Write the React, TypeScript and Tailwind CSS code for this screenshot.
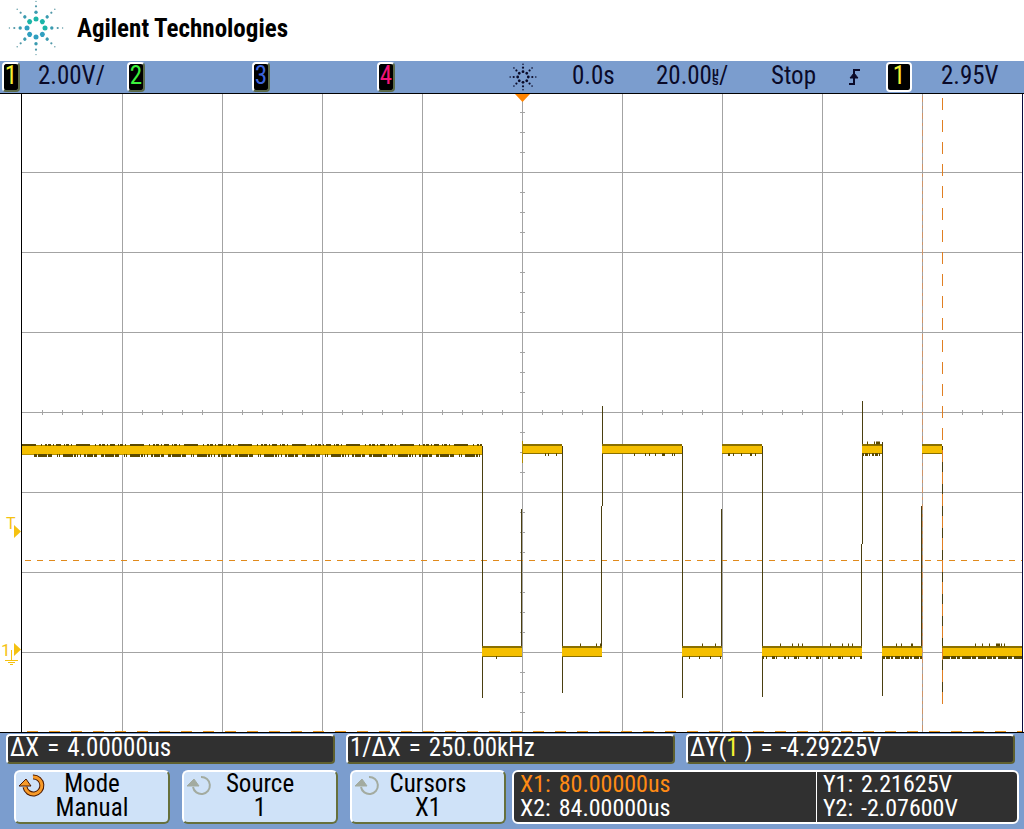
import type { ReactNode } from "react";

const FONT = "font-['Liberation_Sans_Narrow','Roboto_Condensed',Roboto,sans-serif]";

type Level = "high" | "low";

interface Segment {
  from: number;
  to: number;
  level: Level;
  above?: string;
  below?: string;
}

interface Edge {
  x: number;
  top: number;
  bottom: number;
}

// above / below are dash patterns for the noise along each side of the trace
const SEGMENTS: Segment[] = [
  { from: 482, to: 522, level: "low", below: "0 14 1 40" },
  { from: 522, to: 562, level: "high", below: "0 23 1 2 1 7 1 20" },
  { from: 562, to: 602, level: "low", above: "0 18 1 15 1 3 1 9" },
  { from: 602, to: 682, level: "high", below: "0 32 1 10 1 3 1 5 1 6 3 7 1 1 1 4" },
  { from: 682, to: 722, level: "low", above: "0 20 1 12 1 9", below: "0 7 1 9 1 3" },
  { from: 722, to: 762, level: "high", below: "0 6 2 3 1 7 1 2" },
  { from: 762, to: 862, level: "low", above: "0 18 1 11 1 5 1 3 1 9", below: "2 2 1 5 3 1 1 7" },
  { from: 862, to: 882, level: "high", above: "0 5 1 6 1 1 4 9", below: "2 1 3 1 1 2" },
  { from: 882, to: 922, level: "low", above: "0 14 1 4 1 9 2 5", below: "3 1 4 1 2 2 5 1" },
  { from: 922, to: 942, level: "high" },
  { from: 942, to: 1022, level: "low", above: "0 33 1 6 1 6 1 6 4 1 1 2 1 4", below: "8 1 5 1 3 2 9 1 4 2" },
];

const EDGES: Edge[] = [
  { x: 482, top: 446, bottom: 698 },
  { x: 521, top: 509, bottom: 650 },
  { x: 562, top: 446, bottom: 693 },
  { x: 602, top: 406, bottom: 506 },
  { x: 601, top: 506, bottom: 656 },
  { x: 682, top: 446, bottom: 698 },
  { x: 721, top: 509, bottom: 650 },
  { x: 762, top: 446, bottom: 697 },
  { x: 862, top: 401, bottom: 544 },
  { x: 861, top: 544, bottom: 650 },
  { x: 882, top: 442, bottom: 696 },
  { x: 921, top: 506, bottom: 650 },
  { x: 942, top: 446, bottom: 698 },
];

const COLUMNS = [122, 222, 322, 422, 522, 622, 722, 822, 922];
const ROWS = [172, 252, 332, 412, 492, 572, 652];
const X_TICKS = Array.from({ length: 49 }, (_, i) => 42 + i * 20);
const Y_TICKS = Array.from({ length: 31 }, (_, i) => 112 + i * 20);
const SPOKES = [0, 45, 90, 135, 180, 225, 270, 315];

function Trace({ from, to, level, above, below }: Segment) {
  const high = level === "high";
  const y = high ? 444 : 646;
  const height = high ? 10 : 11;
  return (
    <g>
      <rect x={from} y={y} width={to - from} height={height} fill="#8a7000" />
      <rect x={from} y={y + 2} width={to - from} height={height - 3} fill="#f5bf00" />
      {above && <path d={`M${from} ${y - 1}H${to}`} stroke="#5c4a00" strokeWidth="3" strokeDasharray={above} />}
      {below && (
        <path d={`M${from} ${y + height + 0.5}H${to}`} stroke="#5c4a00" strokeWidth="3" strokeDasharray={below} />
      )}
    </g>
  );
}

function Graticule() {
  return (
    <svg viewBox="0 94 1024 639" className="block h-auto w-full bg-white" role="img" aria-label="Channel 1 waveform">
      {/* grid */}
      <g stroke="#a3a3a3" strokeWidth="1">
        {COLUMNS.map((x) => (
          <path key={x} d={`M${x + 0.5} 94V732`} />
        ))}
        {ROWS.map((y) => (
          <path key={y} d={`M22 ${y + 0.5}H1022`} />
        ))}
        {X_TICKS.map((x) => (
          <path key={x} d={`M${x + 0.5} 410V415`} />
        ))}
        {Y_TICKS.map((y) => (
          <path key={y} d={`M520 ${y + 0.5}H525`} />
        ))}
      </g>

      {/* cursors */}
      <path d="M25 560.5H1022" stroke="#e08a1c" strokeDasharray="6 6" />
      <path d="M922.5 96V732" stroke="#cf9468" strokeDasharray="6 4 3 4" />
      <path d="M27 731.5H1022" stroke="#e8951c" strokeDasharray="11 11" />

      {/* waveform */}
      <g>
        {EDGES.map((e) => (
          <path key={e.x} d={`M${e.x + 0.5} ${e.top}V${e.bottom}`} stroke="#4a3f10" />
        ))}
        <rect x="22" y="445" width="460" height="10" fill="#b89200" />
        <rect x="22" y="446" width="460" height="8" fill="#f5bf00" />
        <path d="M22 445H482" stroke="#5c4a00" strokeWidth="2" strokeDasharray="14 5 1 3 2 1 3 2 1 2 5 3 1 1 3 2 1 4" />
        <path
          d="M34 455.5H482"
          stroke="#5c4a00"
          strokeWidth="3"
          strokeDasharray="3 1 9 1 4 5 1 1 1 3 10 1 2 1 1 2 1 3 2 1 6 1 3 4"
        />
        {SEGMENTS.map((s) => (
          <Trace key={s.from} {...s} />
        ))}
        <path d="M522.5 441V463" stroke="#b08a00" />
      </g>
      <path d="M942.5 98V704" stroke="#e07f22" strokeDasharray="12 10" />

      {/* frame */}
      <path d="M21.5 94V732" stroke="#000" />
      <path d="M1022.5 94V732" stroke="#0a0a3c" />
      <path d="M0 732.5H1024" stroke="#000" />
      <path d="M515 94H530L522.5 102Z" fill="#ff8400" />

      {/* trigger level and ground markers */}
      <g fill="#f5c211" className="font-['Roboto',sans-serif]">
        <text x="6" y="529" fontSize="16">T</text>
        <path d="M14 525L21 531.5L14 538Z" />
        <text x="1" y="656" fontSize="17">1</text>
        <path d="M14 643L21 649.5L14 656Z" />
        <path d="M11.5 650V660M5 660.5H18M8 662.5H15M10 664.5H13" stroke="#f5c211" fill="none" />
      </g>
    </svg>
  );
}

function Spark() {
  return (
    <svg viewBox="-28 -28 56 56" className="h-14 w-14 shrink-0" aria-hidden="true">
      {SPOKES.map((a) => (
        <g key={a} transform={`rotate(${a})`}>
          <circle cy="-9" r="2.5" fill={a > 90 && a < 300 ? "#2f9fc0" : "#1cb5a8"} />
          <circle cy="-15.8" r="1.7" fill="#3a9bb0" />
          <circle cy="-21.7" r="1.1" fill="#4f97a8" />
          <circle cy="-26.6" r="0.7" fill="#5f9aa5" />
        </g>
      ))}
    </svg>
  );
}

function SmallSpark() {
  return (
    <svg viewBox="-14 -14 28 28" className="h-7 w-7" aria-hidden="true">
      {SPOKES.map((a) => (
        <g key={a} transform={`rotate(${a})`} fill="#0a0a28">
          <circle cy="-5.3" r="1.4" />
          <circle cy="-9.3" r="1.1" />
          <circle cy="-12.8" r="0.8" />
        </g>
      ))}
    </svg>
  );
}

function Badge({ color, wide, children }: { color: string; wide?: boolean; children: ReactNode }) {
  return (
    <span
      className={`flex h-[30px] items-center justify-center rounded-[4px] border-2 border-white bg-black pb-0.5 ${
        wide ? "w-[26px]" : "w-[18px] border-r-[#5b6a4a] border-b-[#5b6a4a]"
      } ${color}`}
    >
      {children}
    </span>
  );
}

function StatusBar() {
  return (
    <div className="grid h-[33px] grid-cols-[125fr_125fr_125fr_132fr_63fr_84fr_115fr_78fr_37fr_55fr_83fr] items-center border-b border-black bg-[#7b9dce] pl-0.5 text-[25px] leading-[28px] whitespace-nowrap text-[#0a0a28] *:min-w-0">
      <div className="flex items-center gap-[18px]">
        <Badge color="text-[#f5f032]">1</Badge>
        <span className="pb-0.5">2.00V/</span>
      </div>
      <Badge color="text-[#3cf03c]">2</Badge>
      <Badge color="text-[#3c64dc]">3</Badge>
      <Badge color="text-[#f01478]">4</Badge>
      <SmallSpark />
      <span className="pb-0.5">0.0s</span>
      <span className="flex items-center pb-0.5">
        20.00
        <span className="flex flex-col pt-0.5 font-['Liberation_Sans',sans-serif] text-[12px] leading-[9px] font-bold">
          <span>µ</span>
          <span>s</span>
        </span>
        /
      </span>
      <span className="pb-0.5">Stop</span>
      <svg viewBox="0 0 12 20" className="h-5 w-3" fill="none" stroke="#0a0a28" strokeWidth="2" aria-label="Rising edge">
        <path d="M0 17H5V3H11" />
        <path d="M1 11L5 6L9 11Z" fill="#0a0a28" strokeWidth="1" />
      </svg>
      <Badge color="text-[#f5f032]" wide>1</Badge>
      <span className="pb-0.5">2.95V</span>
    </div>
  );
}

function Readout({ label, value }: { label: ReactNode; value: string }) {
  return (
    <div className="flex h-[30px] gap-2 rounded-[4px] border-2 border-t-white border-r-[#5f6030] border-b-[#5f6030] border-l-white bg-[#303030] pl-0.5 text-[25px] leading-6 whitespace-nowrap text-white">
      <span>{label}</span>
      <span>=</span>
      <span>{value}</span>
    </div>
  );
}

function KnobIcon({ active }: { active?: boolean }) {
  return (
    <svg viewBox="0 0 28 24" className="absolute top-0.5 left-0.5 h-6 w-7" fill="none" aria-hidden="true">
      {active && <path d="M15 3A8.5 8.5 0 1 1 7 13" stroke="#4a1800" strokeWidth="5" />}
      <path d="M15 3A8.5 8.5 0 1 1 7 13" stroke={active ? "#f79a28" : "#a3aba0"} strokeWidth={active ? 3 : 2} />
      <path d="M1 12L8 5L13 12Z" fill={active ? "#f79a28" : "#a3aba0"} stroke={active ? "#4a1800" : "#a3aba0"} />
    </svg>
  );
}

function SoftKey({ label, value, active }: { label: string; value: string; active?: boolean }) {
  return (
    <button
      type="button"
      className="relative h-[54px] min-w-0 flex-1 rounded-[6px] border-2 border-t-white border-r-[#66703c] border-b-[#66703c] border-l-white bg-[#cfe2f8] pb-0.5 text-[25px] leading-6 text-black"
    >
      <KnobIcon active={active} />
      <span className="block">{label}</span>
      <span className="block">{value}</span>
    </button>
  );
}

function CursorValue({ name, value }: { name: string; value: string }) {
  return (
    <p className="flex gap-2">
      <span>{name}:</span>
      <span>{value}</span>
    </p>
  );
}

export default function App() {
  return (
    <div className={`min-h-screen bg-[#7b9dce] ${FONT}`}>
      <header className="flex h-[61px] items-start gap-[13px] bg-white pl-2">
        <Spark />
        <h1 className="pt-3.5 text-[25px] leading-[30px] font-bold text-black">Agilent Technologies</h1>
      </header>

      <StatusBar />
      <Graticule />

      <footer className="pt-px pb-1.5">
        <div className="grid grid-cols-3 gap-[11px] pr-[9px] pl-1.5">
          <Readout label="ΔX" value="4.00000us" />
          <Readout label="1/ΔX" value="250.00kHz" />
          <Readout
            label={
              <>
                ΔY(<span className="text-[#f5f032]">1</span> )
              </>
            }
            value="-4.29225V"
          />
        </div>

        <div className="mt-1.5 grid grid-cols-[492fr_507fr] gap-1.5 pr-[5px] pl-3.5">
          <div className="flex gap-3">
            <SoftKey label="Mode" value="Manual" active />
            <SoftKey label="Source" value="1" />
            <SoftKey label="Cursors" value="X1" />
          </div>
          <div className="grid h-[54px] grid-cols-[303fr_200fr] rounded-[6px] border-2 border-white bg-[#303030] text-[24px] leading-6 text-white">
            <div className="border-r border-white pl-1.5">
              <div className="text-[#ff8a14]">
                <CursorValue name="X1" value="80.00000us" />
              </div>
              <CursorValue name="X2" value="84.00000us" />
            </div>
            <div className="pl-1.5">
              <CursorValue name="Y1" value="2.21625V" />
              <CursorValue name="Y2" value="-2.07600V" />
            </div>
          </div>
        </div>
      </footer>
    </div>
  );
}
